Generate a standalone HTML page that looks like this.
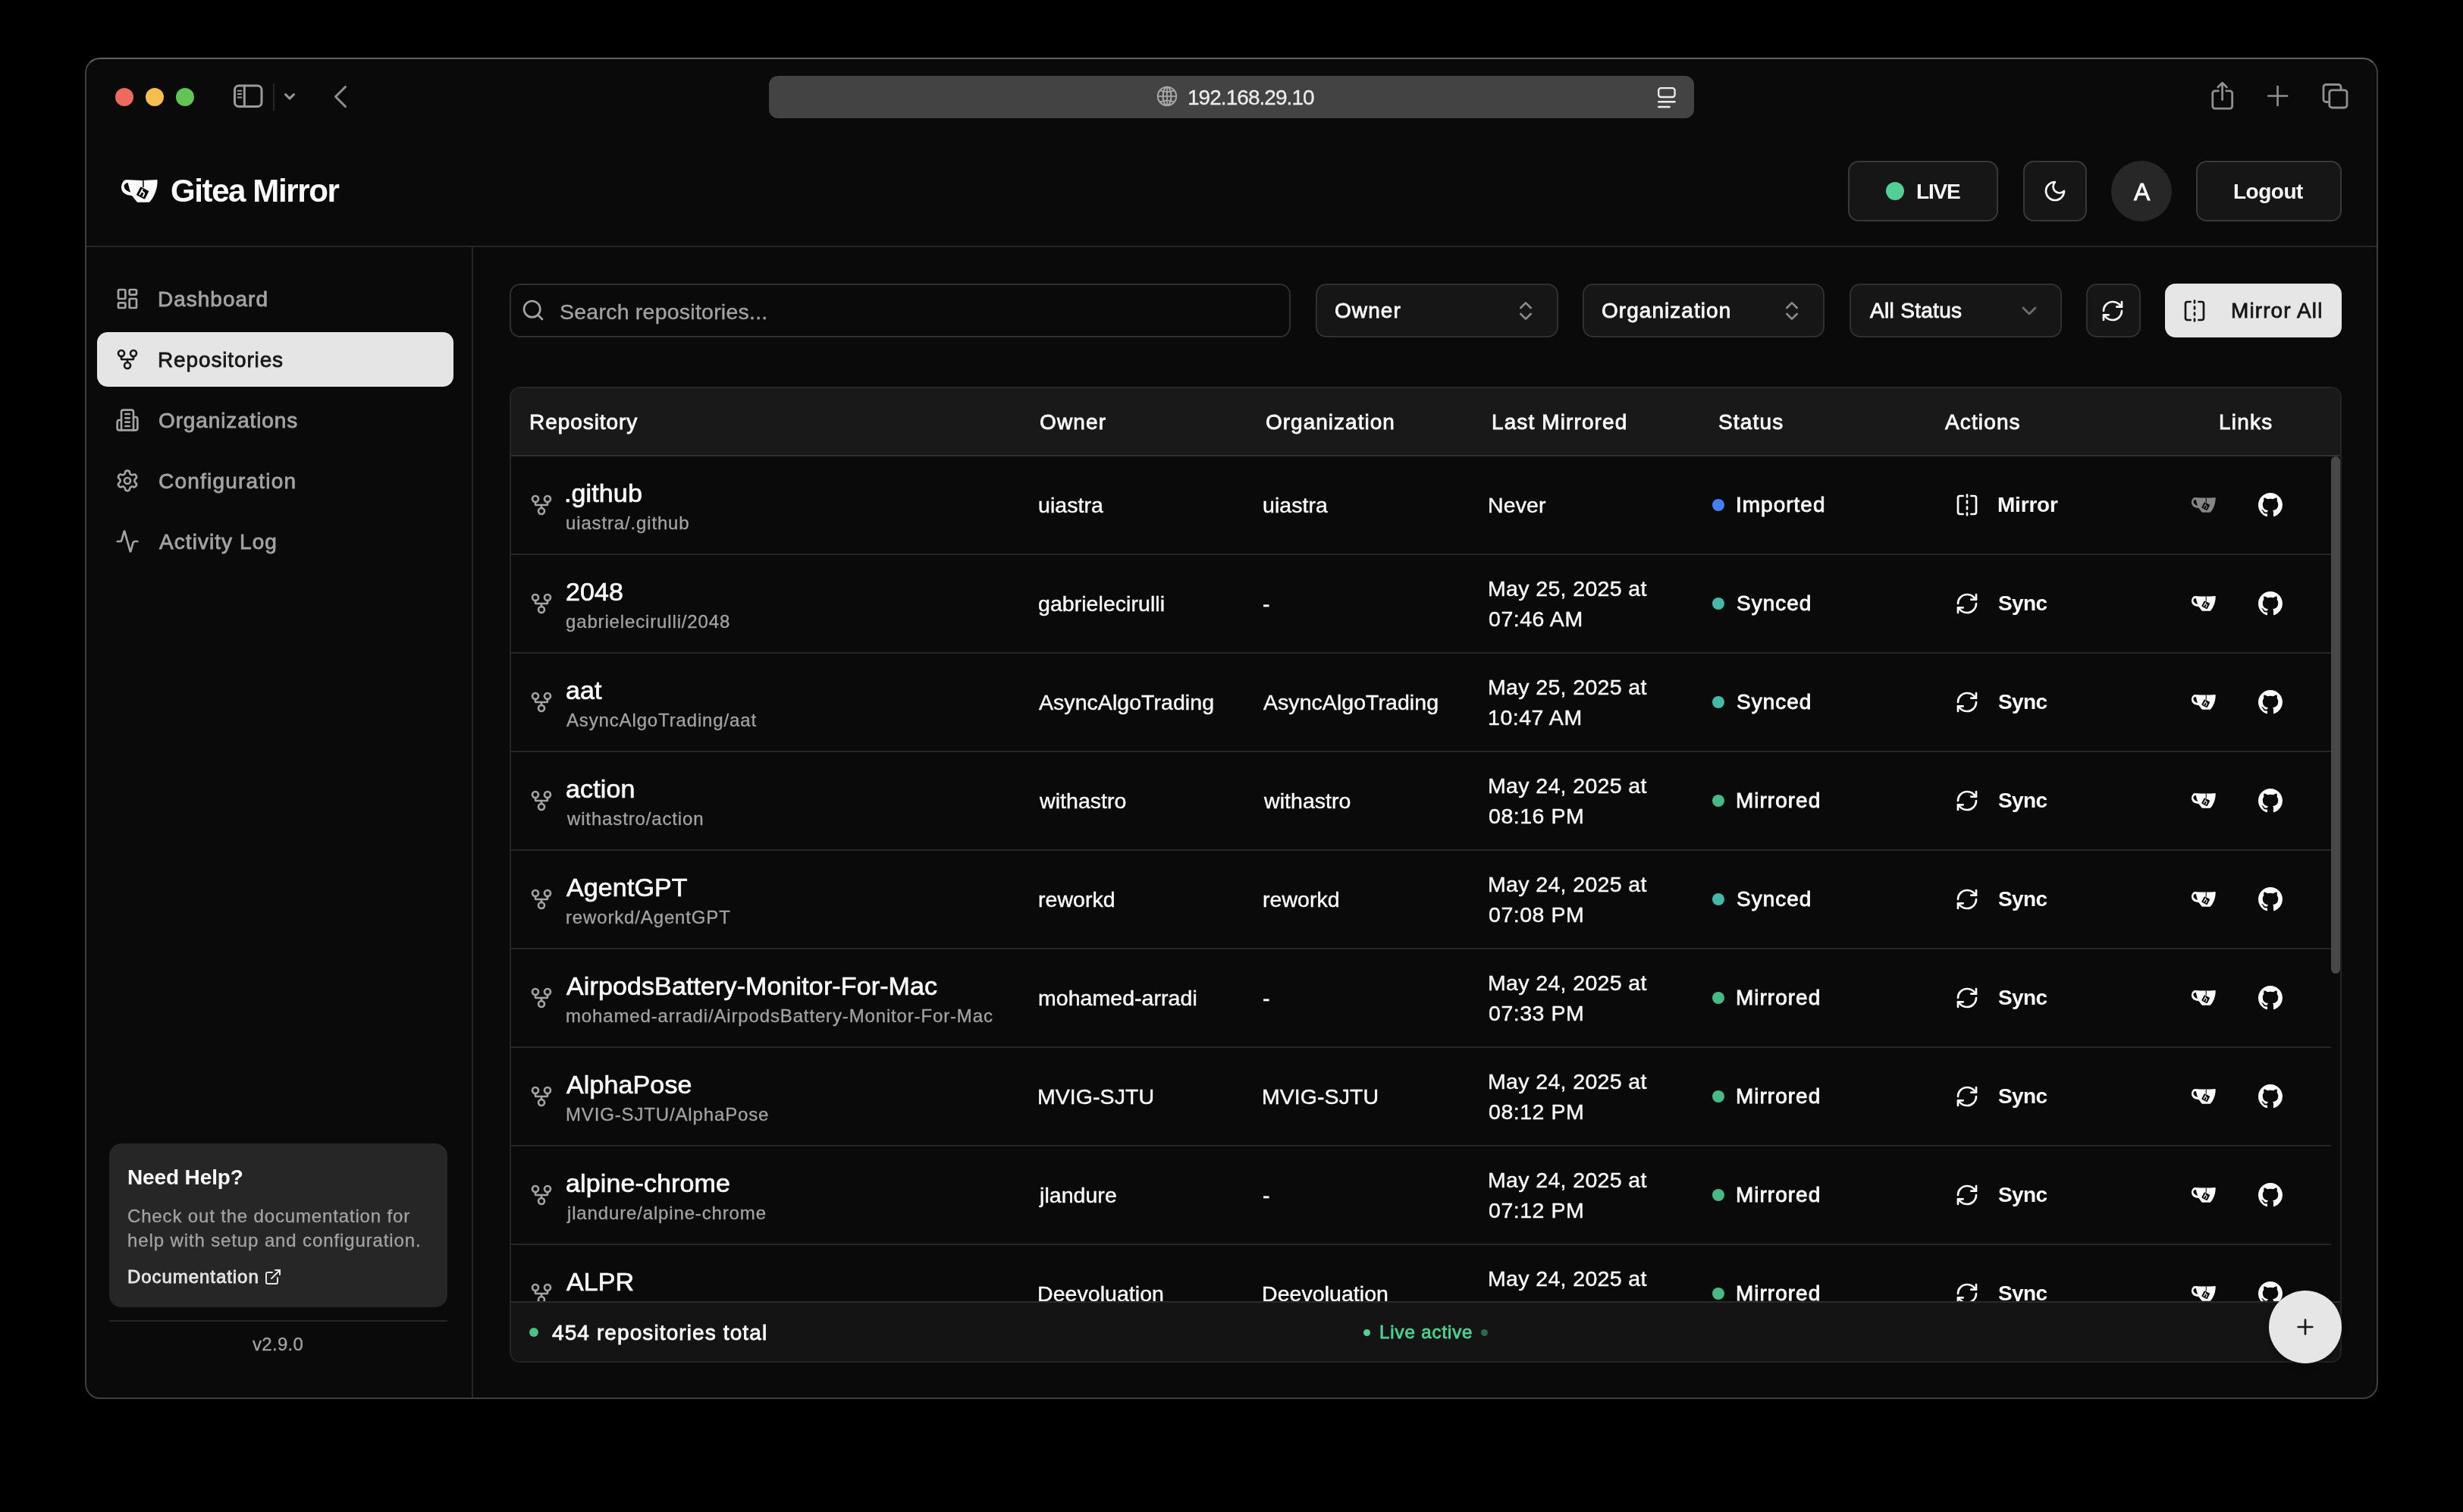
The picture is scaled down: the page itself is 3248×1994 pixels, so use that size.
<!DOCTYPE html>
<html><head><meta charset="utf-8">
<style>
html,body{margin:0;padding:0;}
body{width:3248px;height:1994px;background:#000;position:relative;overflow:hidden;font-family:"Liberation Sans",sans-serif;}
.box{position:absolute;box-sizing:border-box;}
.t{position:absolute;white-space:nowrap;font-family:"Liberation Sans",sans-serif;z-index:3;will-change:transform;}
.ic{position:absolute;overflow:visible;z-index:3;}
.dot{position:absolute;border-radius:50%;z-index:3;}
</style></head>
<body>
<!-- window -->
<div class="box" style="left:112px;top:76px;width:3024px;height:1769px;border-radius:20px;background:#0a0a0a;border:2px solid #404040;border-top-color:#616161;"></div>

<!-- traffic lights -->
<div class="dot" style="left:152px;top:116px;width:24px;height:24px;background:#ec6a5e"></div>
<div class="dot" style="left:192px;top:116px;width:24px;height:24px;background:#f4bf4f"></div>
<div class="dot" style="left:232px;top:116px;width:24px;height:24px;background:#61c554"></div>

<!-- sidebar toggle etc -->
<svg class="ic" style="left:300px;top:100px;width:170px;height:50px" viewBox="300 100 170 50" fill="none" stroke="#9a9a9a" stroke-linecap="round" stroke-linejoin="round">
  <rect x="309.5" y="112.9" width="35.5" height="27.6" rx="5.5" stroke-width="3"/>
  <path d="M322.3 113 V140.4" stroke-width="3"/>
  <path d="M313.6 119.7 H318.3 M313.6 124.1 H318.3 M313.6 128.5 H318.3" stroke-width="2"/>
  <path d="M361 110 V146" stroke="#262626" stroke-width="2" stroke-linecap="butt"/>
  <path d="M376.5 124.5 L382 130 L387.5 124.5" stroke-width="3"/>
  <path d="M455.5 114.5 L442.5 127.5 L455.5 140.5" stroke-width="3" stroke="#8e8e8e"/>
</svg>

<!-- address bar -->
<div class="box" style="left:1014px;top:100px;width:1220px;height:56px;border-radius:12px;background:#434343"></div>
<svg class="ic" style="left:1520px;top:108px;width:40px;height:40px" viewBox="1520 108 40 40" fill="none" stroke="#a8a8a8" stroke-width="2">
  <circle cx="1539" cy="126.9" r="12.2"/>
  <ellipse cx="1539" cy="126.9" rx="5.4" ry="12.2"/>
  <path d="M1539 114.7 V139.1 M1526.8 126.9 H1551.2" stroke-width="1.8"/>
  <path d="M1529 119.2 Q1539 123.2 1549 119.2 M1529 134.6 Q1539 130.6 1549 134.6" stroke-width="1.8"/>
</svg>
<svg class="ic" style="left:2180px;top:108px;width:40px;height:40px" viewBox="2180 108 40 40" fill="none" stroke="#eeeeee" stroke-linecap="round">
  <rect x="2187.2" y="116.2" width="21.4" height="11.8" rx="3.2" stroke-width="2.3"/>
  <path d="M2187.2 134.3 H2208.6 M2187.2 141 H2201.6" stroke-width="2.4"/>
</svg>

<!-- right toolbar icons -->
<svg class="ic" style="left:2900px;top:100px;width:210px;height:50px" viewBox="2900 100 210 50" fill="none" stroke="#8f8f8f" stroke-width="2.8" stroke-linecap="round" stroke-linejoin="round">
  <path d="M2925.5 119.8 H2921 a3.2 3.2 0 0 0 -3.2 3.2 V140 a3.2 3.2 0 0 0 3.2 3.2 H2940.5 a3.2 3.2 0 0 0 3.2 -3.2 V123 a3.2 3.2 0 0 0 -3.2 -3.2 H2935.8"/>
  <path d="M2930.6 131.5 V109.5 M2924.8 115 L2930.6 109.2 L2936.4 115"/>
  <path d="M3003.6 114 V139 M2991.2 126.5 H3016.2" stroke-width="2.6"/>
  <path d="M3071.9 134.5 H3067.5 a3.5 3.5 0 0 1 -3.5 -3.5 V115 a3.5 3.5 0 0 1 3.5 -3.5 H3083.5 a3.5 3.5 0 0 1 3.5 3.5 V118.8"/>
  <rect x="3071.8" y="118.8" width="23.2" height="23.2" rx="3.5"/>
</svg>

<!-- header buttons -->
<div class="box" style="left:2437px;top:212px;width:198px;height:80px;border-radius:14px;background:#161616;border:2px solid #383838"></div>
<div class="dot" style="left:2487px;top:240px;width:24px;height:24px;background:#52cf95"></div>
<div class="box" style="left:2668px;top:212px;width:84px;height:80px;border-radius:14px;background:#161616;border:2px solid #383838"></div>
<div class="dot" style="left:2784px;top:212px;width:80px;height:80px;background:#272727"></div>
<div class="box" style="left:2896px;top:212px;width:192px;height:80px;border-radius:14px;background:#161616;border:2px solid #383838"></div>

<!-- header bottom border & sidebar border -->
<div class="box" style="left:114px;top:324px;width:3020px;height:2px;background:#262626"></div>
<div class="box" style="left:622px;top:326px;width:2px;height:1517px;background:#262626"></div>

<!-- sidebar active -->
<div class="box" style="left:128px;top:438px;width:470px;height:72px;border-radius:14px;background:#e5e5e5"></div>
<!-- help box -->
<div class="box" style="left:144px;top:1508px;width:446px;height:216px;border-radius:16px;background:#262626"></div>
<div class="box" style="left:144px;top:1741px;width:446px;height:2px;background:#262626"></div>

<!-- toolbar -->
<div class="box" style="left:672px;top:374px;width:1030px;height:71px;border-radius:14px;border:2px solid #2f2f2f"></div>
<div class="box" style="left:1735px;top:374px;width:320px;height:71px;border-radius:14px;background:#161616;border:2px solid #2f2f2f"></div>
<div class="box" style="left:2087px;top:374px;width:319px;height:71px;border-radius:14px;background:#161616;border:2px solid #2f2f2f"></div>
<div class="box" style="left:2439px;top:374px;width:280px;height:71px;border-radius:14px;background:#161616;border:2px solid #2f2f2f"></div>
<div class="box" style="left:2751px;top:374px;width:72px;height:71px;border-radius:14px;background:#161616;border:2px solid #2f2f2f"></div>
<div class="box" style="left:2855px;top:374px;width:233px;height:71px;border-radius:14px;background:#e6e6e6"></div>

<!-- table -->
<div class="box" style="left:672px;top:510px;width:2416px;height:1287px;border-radius:14px;border:2px solid #242424;background:#0a0a0a;overflow:hidden">
  <div class="box" style="left:0;top:0;width:2412px;height:88px;background:#191919"></div>
  <div class="box" style="left:0;top:88px;width:2412px;height:2px;background:#303030"></div>
</div>
<div class="box" style="left:674px;top:730px;width:2400px;height:2px;background:#262626"></div>
<div class="box" style="left:674px;top:860px;width:2400px;height:2px;background:#262626"></div>
<div class="box" style="left:674px;top:990px;width:2400px;height:2px;background:#262626"></div>
<div class="box" style="left:674px;top:1120px;width:2400px;height:2px;background:#262626"></div>
<div class="box" style="left:674px;top:1250px;width:2400px;height:2px;background:#262626"></div>
<div class="box" style="left:674px;top:1380px;width:2400px;height:2px;background:#262626"></div>
<div class="box" style="left:674px;top:1510px;width:2400px;height:2px;background:#262626"></div>
<div class="box" style="left:674px;top:1640px;width:2400px;height:2px;background:#262626"></div>
<div class="box" style="left:3074px;top:602px;width:12px;height:682px;border-radius:6px;background:#484848;z-index:2"></div>
<!-- footer -->
<div class="box" style="left:674px;top:1716px;width:2412px;height:79px;background:#141414;border-top:2px solid #2a2a2a;border-radius:0 0 12px 12px;z-index:5"></div>
<div class="dot" style="left:698px;top:1751px;width:12px;height:12px;background:#4bbf86;z-index:6"></div>
<div class="dot" style="left:1798px;top:1752.7px;width:9px;height:9px;background:#4fd192;z-index:6"></div>
<div class="dot" style="left:1953px;top:1752.7px;width:9px;height:9px;background:#2a6a4c;z-index:6"></div>
<!-- FAB -->
<div class="dot" style="left:2992px;top:1702px;width:96px;height:96px;background:#e6e6e6;z-index:7;box-shadow:0 4px 10px rgba(0,0,0,.25)"></div>
<svg class="ic" style="left:3024px;top:1734px;width:32px;height:32px;z-index:8" viewBox="0 0 24 24" fill="none" stroke="#171717" stroke-width="2" stroke-linecap="round"><path d="M5 12h14"/><path d="M12 5v14"/></svg>

<svg class="ic" style="left:152px;top:378px;width:32px;height:32px;" viewBox="0 0 24 24" fill="none" stroke="#a3a3a3" stroke-width="2" stroke-linecap="round" stroke-linejoin="round"><rect width="7" height="9" x="3" y="3" rx="1"/><rect width="7" height="5" x="14" y="3" rx="1"/><rect width="7" height="9" x="14" y="12" rx="1"/><rect width="7" height="5" x="3" y="16" rx="1"/></svg>
<svg class="ic" style="left:152px;top:458px;width:32px;height:32px;" viewBox="0 0 24 24" fill="none" stroke="#171717" stroke-width="2" stroke-linecap="round" stroke-linejoin="round"><circle cx="12" cy="18" r="3"/><circle cx="6" cy="6" r="3"/><circle cx="18" cy="6" r="3"/><path d="M18 9v2c0 .6-.4 1-1 1H7c-.6 0-1-.4-1-1V9"/><path d="M12 12v3"/></svg>
<svg class="ic" style="left:152px;top:538px;width:32px;height:32px;" viewBox="0 0 24 24" fill="none" stroke="#a3a3a3" stroke-width="2" stroke-linecap="round" stroke-linejoin="round"><path d="M6 22V4a2 2 0 0 1 2-2h8a2 2 0 0 1 2 2v18Z"/><path d="M6 12H4a2 2 0 0 0-2 2v6a2 2 0 0 0 2 2h2"/><path d="M18 9h2a2 2 0 0 1 2 2v9a2 2 0 0 1-2 2h-2"/><path d="M10 6h4"/><path d="M10 10h4"/><path d="M10 14h4"/><path d="M10 18h4"/></svg>
<svg class="ic" style="left:152px;top:618px;width:32px;height:32px;" viewBox="0 0 24 24" fill="none" stroke="#a3a3a3" stroke-width="2" stroke-linecap="round" stroke-linejoin="round"><path d="M9.671 4.136a2.34 2.34 0 0 1 4.659 0 2.34 2.34 0 0 0 3.319 1.915 2.34 2.34 0 0 1 2.33 4.033 2.34 2.34 0 0 0 0 3.831 2.34 2.34 0 0 1-2.33 4.033 2.34 2.34 0 0 0-3.319 1.915 2.34 2.34 0 0 1-4.659 0 2.34 2.34 0 0 0-3.32-1.915 2.34 2.34 0 0 1-2.33-4.033 2.34 2.34 0 0 0 0-3.831A2.34 2.34 0 0 1 6.35 6.051a2.34 2.34 0 0 0 3.319-1.915"/><circle cx="12" cy="12" r="3"/></svg>
<svg class="ic" style="left:152px;top:698px;width:32px;height:32px;" viewBox="0 0 24 24" fill="none" stroke="#a3a3a3" stroke-width="2" stroke-linecap="round" stroke-linejoin="round"><path d="M22 12h-2.48a2 2 0 0 0-1.93 1.46l-2.35 8.36a.25.25 0 0 1-.48 0L9.24 2.18a.25.25 0 0 0-.48 0l-2.35 8.36A2 2 0 0 1 4.49 12H2"/></svg>
<svg class="ic" style="left:348px;top:1671.8px;width:24px;height:24px;" viewBox="0 0 24 24" fill="none" stroke="#e5e5e5" stroke-width="2" stroke-linecap="round" stroke-linejoin="round"><path d="M15 3h6v6"/><path d="M10 14 21 3"/><path d="M18 13v6a2 2 0 0 1-2 2H5a2 2 0 0 1-2-2V8a2 2 0 0 1 2-2h6"/></svg>
<svg class="ic" style="left:687.3px;top:393.2px;width:32px;height:32px;" viewBox="0 0 24 24" fill="none" stroke="#a3a3a3" stroke-width="2" stroke-linecap="round" stroke-linejoin="round"><circle cx="11" cy="11" r="8"/><path d="m21 21-4.3-4.3"/></svg>
<svg class="ic" style="left:1996px;top:394px;width:32px;height:32px;" viewBox="0 0 24 24" fill="none" stroke="#8a8a8a" stroke-width="2" stroke-linecap="round" stroke-linejoin="round"><path d="m7 15 5 5 5-5"/><path d="m7 9 5-5 5 5"/></svg>
<svg class="ic" style="left:2347.4px;top:394px;width:32px;height:32px;" viewBox="0 0 24 24" fill="none" stroke="#8a8a8a" stroke-width="2" stroke-linecap="round" stroke-linejoin="round"><path d="m7 15 5 5 5-5"/><path d="m7 9 5-5 5 5"/></svg>
<svg class="ic" style="left:2660px;top:394px;width:32px;height:32px;" viewBox="0 0 24 24" fill="none" stroke="#6f6f6f" stroke-width="2" stroke-linecap="round" stroke-linejoin="round"><path d="m6 9 6 6 6-6"/></svg>
<svg class="ic" style="left:2770px;top:394px;width:32px;height:32px;" viewBox="0 0 24 24" fill="none" stroke="#fafafa" stroke-width="2" stroke-linecap="round" stroke-linejoin="round"><path d="M3 12a9 9 0 0 1 9-9 9.75 9.75 0 0 1 6.74 2.74L21 8"/><path d="M21 3v5h-5"/><path d="M21 12a9 9 0 0 1-9 9 9.75 9.75 0 0 1-6.74-2.74L3 16"/><path d="M8 16H3v5"/></svg>
<svg class="ic" style="left:2878px;top:394px;width:32px;height:32px;" viewBox="0 0 24 24" fill="none" stroke="#171717" stroke-width="2" stroke-linecap="round" stroke-linejoin="round"><path d="M8 3H5a2 2 0 0 0-2 2v14c0 1.1.9 2 2 2h3"/><path d="M16 3h3a2 2 0 0 1 2 2v14a2 2 0 0 1-2 2h-3"/><path d="M12 20v2"/><path d="M12 14v2"/><path d="M12 8v2"/><path d="M12 2v2"/></svg>
<svg class="ic" style="left:2694px;top:235.5px;width:32px;height:32px;" viewBox="0 0 24 24" fill="none" stroke="#fafafa" stroke-width="2" stroke-linecap="round" stroke-linejoin="round"><path d="M12 3a6 6 0 0 0 9 9 9 9 0 1 1-9-9Z"/></svg>
<svg class="ic" style="left:160px;top:237px;width:48px;height:30.0px;" viewBox="0 0 48 30"><path fill="#fafafa" d="M6.7 0.1 Q28 1.7 47.4 0.1 C47.7 3 47.5 8 46 13 C44 20 40.5 26.5 36.7 29.8 L21.1 29.8 C18.5 27 16 23.5 13.9 21 C9 20.6 6 19.6 3.5 17.5 C1 15.5 0 12.5 0 10.2 C0 4.5 3.5 0.3 6.7 0.1 Z"/><path fill="#0a0a0a" d="M8.6 4.1 C5.5 4.6 3.6 6.5 3.6 8.6 C3.8 12.5 7.5 15.5 12 16.6 C10.8 12.5 9.6 8.2 8.6 4.1 Z"/><path stroke="#0a0a0a" stroke-width="1.6" d="M28.9 0.8 V10"/><g transform="translate(28.1 17.6) rotate(27.6)"><rect x="-6.3" y="-6.2" width="12.6" height="12.4" rx="1.4" fill="#0a0a0a"/><path fill="none" stroke="#fafafa" stroke-width="1.7" stroke-linecap="round" d="M-2.5 -3.9 V3.7 M-2.5 0.3 C-2.5 -2.2 2.4 -2.2 2.4 0.3 V3.7"/></g></svg>
<svg class="ic" style="left:698px;top:650px;width:32px;height:32px;" viewBox="0 0 24 24" fill="none" stroke="#a3a3a3" stroke-width="2" stroke-linecap="round" stroke-linejoin="round"><circle cx="12" cy="18" r="3"/><circle cx="6" cy="6" r="3"/><circle cx="18" cy="6" r="3"/><path d="M18 9v2c0 .6-.4 1-1 1H7c-.6 0-1-.4-1-1V9"/><path d="M12 12v3"/></svg>
<svg class="ic" style="left:2578px;top:650px;width:32px;height:32px;" viewBox="0 0 24 24" fill="none" stroke="#fafafa" stroke-width="2" stroke-linecap="round" stroke-linejoin="round"><path d="M8 3H5a2 2 0 0 0-2 2v14c0 1.1.9 2 2 2h3"/><path d="M16 3h3a2 2 0 0 1 2 2v14a2 2 0 0 1-2 2h-3"/><path d="M12 20v2"/><path d="M12 14v2"/><path d="M12 8v2"/><path d="M12 2v2"/></svg>
<svg class="ic" style="left:2890px;top:656px;width:32px;height:20.0px;" viewBox="0 0 48 30"><path fill="#868686" d="M6.7 0.1 Q28 1.7 47.4 0.1 C47.7 3 47.5 8 46 13 C44 20 40.5 26.5 36.7 29.8 L21.1 29.8 C18.5 27 16 23.5 13.9 21 C9 20.6 6 19.6 3.5 17.5 C1 15.5 0 12.5 0 10.2 C0 4.5 3.5 0.3 6.7 0.1 Z"/><path fill="#0a0a0a" d="M8.6 4.1 C5.5 4.6 3.6 6.5 3.6 8.6 C3.8 12.5 7.5 15.5 12 16.6 C10.8 12.5 9.6 8.2 8.6 4.1 Z"/><path stroke="#0a0a0a" stroke-width="1.6" d="M28.9 0.8 V10"/><g transform="translate(28.1 17.6) rotate(27.6)"><rect x="-6.3" y="-6.2" width="12.6" height="12.4" rx="1.4" fill="#0a0a0a"/><path fill="none" stroke="#868686" stroke-width="1.7" stroke-linecap="round" d="M-2.5 -3.9 V3.7 M-2.5 0.3 C-2.5 -2.2 2.4 -2.2 2.4 0.3 V3.7"/></g></svg>
<svg class="ic" style="left:2978px;top:650px;width:32px;height:32px" viewBox="0 0 16 16"><path fill="#fafafa" d="M8 0C3.58 0 0 3.58 0 8c0 3.54 2.29 6.53 5.47 7.59.4.07.55-.17.55-.38 0-.19-.01-.82-.01-1.49-2.01.37-2.53-.49-2.69-.94-.09-.23-.48-.94-.82-1.13-.28-.15-.68-.52-.01-.53.63-.01 1.08.58 1.23.82.72 1.21 1.87.87 2.33.66.07-.52.28-.87.51-1.07-1.78-.2-3.64-.89-3.64-3.95 0-.87.31-1.59.82-2.15-.08-.2-.36-1.02.08-2.12 0 0 .67-.21 2.2.82.64-.18 1.32-.27 2-.27.68 0 1.36.09 2 .27 1.53-1.04 2.2-.82 2.2-.82.44 1.1.16 1.92.08 2.12.51.56.82 1.27.82 2.15 0 3.07-1.87 3.75-3.65 3.95.29.25.54.73.54 1.48 0 1.07-.01 1.93-.01 2.2 0 .21.15.46.55.38A8.013 8.013 0 0016 8c0-4.42-3.58-8-8-8z"/></svg>
<div class="dot" style="left:2258px;top:658px;width:16px;height:16px;background:#4380fa"></div>
<svg class="ic" style="left:698px;top:780px;width:32px;height:32px;" viewBox="0 0 24 24" fill="none" stroke="#a3a3a3" stroke-width="2" stroke-linecap="round" stroke-linejoin="round"><circle cx="12" cy="18" r="3"/><circle cx="6" cy="6" r="3"/><circle cx="18" cy="6" r="3"/><path d="M18 9v2c0 .6-.4 1-1 1H7c-.6 0-1-.4-1-1V9"/><path d="M12 12v3"/></svg>
<svg class="ic" style="left:2578px;top:780px;width:32px;height:32px;" viewBox="0 0 24 24" fill="none" stroke="#fafafa" stroke-width="2" stroke-linecap="round" stroke-linejoin="round"><path d="M3 12a9 9 0 0 1 9-9 9.75 9.75 0 0 1 6.74 2.74L21 8"/><path d="M21 3v5h-5"/><path d="M21 12a9 9 0 0 1-9 9 9.75 9.75 0 0 1-6.74-2.74L3 16"/><path d="M8 16H3v5"/></svg>
<svg class="ic" style="left:2890px;top:786px;width:32px;height:20.0px;" viewBox="0 0 48 30"><path fill="#fafafa" d="M6.7 0.1 Q28 1.7 47.4 0.1 C47.7 3 47.5 8 46 13 C44 20 40.5 26.5 36.7 29.8 L21.1 29.8 C18.5 27 16 23.5 13.9 21 C9 20.6 6 19.6 3.5 17.5 C1 15.5 0 12.5 0 10.2 C0 4.5 3.5 0.3 6.7 0.1 Z"/><path fill="#0a0a0a" d="M8.6 4.1 C5.5 4.6 3.6 6.5 3.6 8.6 C3.8 12.5 7.5 15.5 12 16.6 C10.8 12.5 9.6 8.2 8.6 4.1 Z"/><path stroke="#0a0a0a" stroke-width="1.6" d="M28.9 0.8 V10"/><g transform="translate(28.1 17.6) rotate(27.6)"><rect x="-6.3" y="-6.2" width="12.6" height="12.4" rx="1.4" fill="#0a0a0a"/><path fill="none" stroke="#fafafa" stroke-width="1.7" stroke-linecap="round" d="M-2.5 -3.9 V3.7 M-2.5 0.3 C-2.5 -2.2 2.4 -2.2 2.4 0.3 V3.7"/></g></svg>
<svg class="ic" style="left:2978px;top:780px;width:32px;height:32px" viewBox="0 0 16 16"><path fill="#fafafa" d="M8 0C3.58 0 0 3.58 0 8c0 3.54 2.29 6.53 5.47 7.59.4.07.55-.17.55-.38 0-.19-.01-.82-.01-1.49-2.01.37-2.53-.49-2.69-.94-.09-.23-.48-.94-.82-1.13-.28-.15-.68-.52-.01-.53.63-.01 1.08.58 1.23.82.72 1.21 1.87.87 2.33.66.07-.52.28-.87.51-1.07-1.78-.2-3.64-.89-3.64-3.95 0-.87.31-1.59.82-2.15-.08-.2-.36-1.02.08-2.12 0 0 .67-.21 2.2.82.64-.18 1.32-.27 2-.27.68 0 1.36.09 2 .27 1.53-1.04 2.2-.82 2.2-.82.44 1.1.16 1.92.08 2.12.51.56.82 1.27.82 2.15 0 3.07-1.87 3.75-3.65 3.95.29.25.54.73.54 1.48 0 1.07-.01 1.93-.01 2.2 0 .21.15.46.55.38A8.013 8.013 0 0016 8c0-4.42-3.58-8-8-8z"/></svg>
<div class="dot" style="left:2258px;top:788px;width:16px;height:16px;background:#45b9a8"></div>
<svg class="ic" style="left:698px;top:910px;width:32px;height:32px;" viewBox="0 0 24 24" fill="none" stroke="#a3a3a3" stroke-width="2" stroke-linecap="round" stroke-linejoin="round"><circle cx="12" cy="18" r="3"/><circle cx="6" cy="6" r="3"/><circle cx="18" cy="6" r="3"/><path d="M18 9v2c0 .6-.4 1-1 1H7c-.6 0-1-.4-1-1V9"/><path d="M12 12v3"/></svg>
<svg class="ic" style="left:2578px;top:910px;width:32px;height:32px;" viewBox="0 0 24 24" fill="none" stroke="#fafafa" stroke-width="2" stroke-linecap="round" stroke-linejoin="round"><path d="M3 12a9 9 0 0 1 9-9 9.75 9.75 0 0 1 6.74 2.74L21 8"/><path d="M21 3v5h-5"/><path d="M21 12a9 9 0 0 1-9 9 9.75 9.75 0 0 1-6.74-2.74L3 16"/><path d="M8 16H3v5"/></svg>
<svg class="ic" style="left:2890px;top:916px;width:32px;height:20.0px;" viewBox="0 0 48 30"><path fill="#fafafa" d="M6.7 0.1 Q28 1.7 47.4 0.1 C47.7 3 47.5 8 46 13 C44 20 40.5 26.5 36.7 29.8 L21.1 29.8 C18.5 27 16 23.5 13.9 21 C9 20.6 6 19.6 3.5 17.5 C1 15.5 0 12.5 0 10.2 C0 4.5 3.5 0.3 6.7 0.1 Z"/><path fill="#0a0a0a" d="M8.6 4.1 C5.5 4.6 3.6 6.5 3.6 8.6 C3.8 12.5 7.5 15.5 12 16.6 C10.8 12.5 9.6 8.2 8.6 4.1 Z"/><path stroke="#0a0a0a" stroke-width="1.6" d="M28.9 0.8 V10"/><g transform="translate(28.1 17.6) rotate(27.6)"><rect x="-6.3" y="-6.2" width="12.6" height="12.4" rx="1.4" fill="#0a0a0a"/><path fill="none" stroke="#fafafa" stroke-width="1.7" stroke-linecap="round" d="M-2.5 -3.9 V3.7 M-2.5 0.3 C-2.5 -2.2 2.4 -2.2 2.4 0.3 V3.7"/></g></svg>
<svg class="ic" style="left:2978px;top:910px;width:32px;height:32px" viewBox="0 0 16 16"><path fill="#fafafa" d="M8 0C3.58 0 0 3.58 0 8c0 3.54 2.29 6.53 5.47 7.59.4.07.55-.17.55-.38 0-.19-.01-.82-.01-1.49-2.01.37-2.53-.49-2.69-.94-.09-.23-.48-.94-.82-1.13-.28-.15-.68-.52-.01-.53.63-.01 1.08.58 1.23.82.72 1.21 1.87.87 2.33.66.07-.52.28-.87.51-1.07-1.78-.2-3.64-.89-3.64-3.95 0-.87.31-1.59.82-2.15-.08-.2-.36-1.02.08-2.12 0 0 .67-.21 2.2.82.64-.18 1.32-.27 2-.27.68 0 1.36.09 2 .27 1.53-1.04 2.2-.82 2.2-.82.44 1.1.16 1.92.08 2.12.51.56.82 1.27.82 2.15 0 3.07-1.87 3.75-3.65 3.95.29.25.54.73.54 1.48 0 1.07-.01 1.93-.01 2.2 0 .21.15.46.55.38A8.013 8.013 0 0016 8c0-4.42-3.58-8-8-8z"/></svg>
<div class="dot" style="left:2258px;top:918px;width:16px;height:16px;background:#45b9a8"></div>
<svg class="ic" style="left:698px;top:1040px;width:32px;height:32px;" viewBox="0 0 24 24" fill="none" stroke="#a3a3a3" stroke-width="2" stroke-linecap="round" stroke-linejoin="round"><circle cx="12" cy="18" r="3"/><circle cx="6" cy="6" r="3"/><circle cx="18" cy="6" r="3"/><path d="M18 9v2c0 .6-.4 1-1 1H7c-.6 0-1-.4-1-1V9"/><path d="M12 12v3"/></svg>
<svg class="ic" style="left:2578px;top:1040px;width:32px;height:32px;" viewBox="0 0 24 24" fill="none" stroke="#fafafa" stroke-width="2" stroke-linecap="round" stroke-linejoin="round"><path d="M3 12a9 9 0 0 1 9-9 9.75 9.75 0 0 1 6.74 2.74L21 8"/><path d="M21 3v5h-5"/><path d="M21 12a9 9 0 0 1-9 9 9.75 9.75 0 0 1-6.74-2.74L3 16"/><path d="M8 16H3v5"/></svg>
<svg class="ic" style="left:2890px;top:1046px;width:32px;height:20.0px;" viewBox="0 0 48 30"><path fill="#fafafa" d="M6.7 0.1 Q28 1.7 47.4 0.1 C47.7 3 47.5 8 46 13 C44 20 40.5 26.5 36.7 29.8 L21.1 29.8 C18.5 27 16 23.5 13.9 21 C9 20.6 6 19.6 3.5 17.5 C1 15.5 0 12.5 0 10.2 C0 4.5 3.5 0.3 6.7 0.1 Z"/><path fill="#0a0a0a" d="M8.6 4.1 C5.5 4.6 3.6 6.5 3.6 8.6 C3.8 12.5 7.5 15.5 12 16.6 C10.8 12.5 9.6 8.2 8.6 4.1 Z"/><path stroke="#0a0a0a" stroke-width="1.6" d="M28.9 0.8 V10"/><g transform="translate(28.1 17.6) rotate(27.6)"><rect x="-6.3" y="-6.2" width="12.6" height="12.4" rx="1.4" fill="#0a0a0a"/><path fill="none" stroke="#fafafa" stroke-width="1.7" stroke-linecap="round" d="M-2.5 -3.9 V3.7 M-2.5 0.3 C-2.5 -2.2 2.4 -2.2 2.4 0.3 V3.7"/></g></svg>
<svg class="ic" style="left:2978px;top:1040px;width:32px;height:32px" viewBox="0 0 16 16"><path fill="#fafafa" d="M8 0C3.58 0 0 3.58 0 8c0 3.54 2.29 6.53 5.47 7.59.4.07.55-.17.55-.38 0-.19-.01-.82-.01-1.49-2.01.37-2.53-.49-2.69-.94-.09-.23-.48-.94-.82-1.13-.28-.15-.68-.52-.01-.53.63-.01 1.08.58 1.23.82.72 1.21 1.87.87 2.33.66.07-.52.28-.87.51-1.07-1.78-.2-3.64-.89-3.64-3.95 0-.87.31-1.59.82-2.15-.08-.2-.36-1.02.08-2.12 0 0 .67-.21 2.2.82.64-.18 1.32-.27 2-.27.68 0 1.36.09 2 .27 1.53-1.04 2.2-.82 2.2-.82.44 1.1.16 1.92.08 2.12.51.56.82 1.27.82 2.15 0 3.07-1.87 3.75-3.65 3.95.29.25.54.73.54 1.48 0 1.07-.01 1.93-.01 2.2 0 .21.15.46.55.38A8.013 8.013 0 0016 8c0-4.42-3.58-8-8-8z"/></svg>
<div class="dot" style="left:2258px;top:1048px;width:16px;height:16px;background:#46b985"></div>
<svg class="ic" style="left:698px;top:1170px;width:32px;height:32px;" viewBox="0 0 24 24" fill="none" stroke="#a3a3a3" stroke-width="2" stroke-linecap="round" stroke-linejoin="round"><circle cx="12" cy="18" r="3"/><circle cx="6" cy="6" r="3"/><circle cx="18" cy="6" r="3"/><path d="M18 9v2c0 .6-.4 1-1 1H7c-.6 0-1-.4-1-1V9"/><path d="M12 12v3"/></svg>
<svg class="ic" style="left:2578px;top:1170px;width:32px;height:32px;" viewBox="0 0 24 24" fill="none" stroke="#fafafa" stroke-width="2" stroke-linecap="round" stroke-linejoin="round"><path d="M3 12a9 9 0 0 1 9-9 9.75 9.75 0 0 1 6.74 2.74L21 8"/><path d="M21 3v5h-5"/><path d="M21 12a9 9 0 0 1-9 9 9.75 9.75 0 0 1-6.74-2.74L3 16"/><path d="M8 16H3v5"/></svg>
<svg class="ic" style="left:2890px;top:1176px;width:32px;height:20.0px;" viewBox="0 0 48 30"><path fill="#fafafa" d="M6.7 0.1 Q28 1.7 47.4 0.1 C47.7 3 47.5 8 46 13 C44 20 40.5 26.5 36.7 29.8 L21.1 29.8 C18.5 27 16 23.5 13.9 21 C9 20.6 6 19.6 3.5 17.5 C1 15.5 0 12.5 0 10.2 C0 4.5 3.5 0.3 6.7 0.1 Z"/><path fill="#0a0a0a" d="M8.6 4.1 C5.5 4.6 3.6 6.5 3.6 8.6 C3.8 12.5 7.5 15.5 12 16.6 C10.8 12.5 9.6 8.2 8.6 4.1 Z"/><path stroke="#0a0a0a" stroke-width="1.6" d="M28.9 0.8 V10"/><g transform="translate(28.1 17.6) rotate(27.6)"><rect x="-6.3" y="-6.2" width="12.6" height="12.4" rx="1.4" fill="#0a0a0a"/><path fill="none" stroke="#fafafa" stroke-width="1.7" stroke-linecap="round" d="M-2.5 -3.9 V3.7 M-2.5 0.3 C-2.5 -2.2 2.4 -2.2 2.4 0.3 V3.7"/></g></svg>
<svg class="ic" style="left:2978px;top:1170px;width:32px;height:32px" viewBox="0 0 16 16"><path fill="#fafafa" d="M8 0C3.58 0 0 3.58 0 8c0 3.54 2.29 6.53 5.47 7.59.4.07.55-.17.55-.38 0-.19-.01-.82-.01-1.49-2.01.37-2.53-.49-2.69-.94-.09-.23-.48-.94-.82-1.13-.28-.15-.68-.52-.01-.53.63-.01 1.08.58 1.23.82.72 1.21 1.87.87 2.33.66.07-.52.28-.87.51-1.07-1.78-.2-3.64-.89-3.64-3.95 0-.87.31-1.59.82-2.15-.08-.2-.36-1.02.08-2.12 0 0 .67-.21 2.2.82.64-.18 1.32-.27 2-.27.68 0 1.36.09 2 .27 1.53-1.04 2.2-.82 2.2-.82.44 1.1.16 1.92.08 2.12.51.56.82 1.27.82 2.15 0 3.07-1.87 3.75-3.65 3.95.29.25.54.73.54 1.48 0 1.07-.01 1.93-.01 2.2 0 .21.15.46.55.38A8.013 8.013 0 0016 8c0-4.42-3.58-8-8-8z"/></svg>
<div class="dot" style="left:2258px;top:1178px;width:16px;height:16px;background:#45b9a8"></div>
<svg class="ic" style="left:698px;top:1300px;width:32px;height:32px;" viewBox="0 0 24 24" fill="none" stroke="#a3a3a3" stroke-width="2" stroke-linecap="round" stroke-linejoin="round"><circle cx="12" cy="18" r="3"/><circle cx="6" cy="6" r="3"/><circle cx="18" cy="6" r="3"/><path d="M18 9v2c0 .6-.4 1-1 1H7c-.6 0-1-.4-1-1V9"/><path d="M12 12v3"/></svg>
<svg class="ic" style="left:2578px;top:1300px;width:32px;height:32px;" viewBox="0 0 24 24" fill="none" stroke="#fafafa" stroke-width="2" stroke-linecap="round" stroke-linejoin="round"><path d="M3 12a9 9 0 0 1 9-9 9.75 9.75 0 0 1 6.74 2.74L21 8"/><path d="M21 3v5h-5"/><path d="M21 12a9 9 0 0 1-9 9 9.75 9.75 0 0 1-6.74-2.74L3 16"/><path d="M8 16H3v5"/></svg>
<svg class="ic" style="left:2890px;top:1306px;width:32px;height:20.0px;" viewBox="0 0 48 30"><path fill="#fafafa" d="M6.7 0.1 Q28 1.7 47.4 0.1 C47.7 3 47.5 8 46 13 C44 20 40.5 26.5 36.7 29.8 L21.1 29.8 C18.5 27 16 23.5 13.9 21 C9 20.6 6 19.6 3.5 17.5 C1 15.5 0 12.5 0 10.2 C0 4.5 3.5 0.3 6.7 0.1 Z"/><path fill="#0a0a0a" d="M8.6 4.1 C5.5 4.6 3.6 6.5 3.6 8.6 C3.8 12.5 7.5 15.5 12 16.6 C10.8 12.5 9.6 8.2 8.6 4.1 Z"/><path stroke="#0a0a0a" stroke-width="1.6" d="M28.9 0.8 V10"/><g transform="translate(28.1 17.6) rotate(27.6)"><rect x="-6.3" y="-6.2" width="12.6" height="12.4" rx="1.4" fill="#0a0a0a"/><path fill="none" stroke="#fafafa" stroke-width="1.7" stroke-linecap="round" d="M-2.5 -3.9 V3.7 M-2.5 0.3 C-2.5 -2.2 2.4 -2.2 2.4 0.3 V3.7"/></g></svg>
<svg class="ic" style="left:2978px;top:1300px;width:32px;height:32px" viewBox="0 0 16 16"><path fill="#fafafa" d="M8 0C3.58 0 0 3.58 0 8c0 3.54 2.29 6.53 5.47 7.59.4.07.55-.17.55-.38 0-.19-.01-.82-.01-1.49-2.01.37-2.53-.49-2.69-.94-.09-.23-.48-.94-.82-1.13-.28-.15-.68-.52-.01-.53.63-.01 1.08.58 1.23.82.72 1.21 1.87.87 2.33.66.07-.52.28-.87.51-1.07-1.78-.2-3.64-.89-3.64-3.95 0-.87.31-1.59.82-2.15-.08-.2-.36-1.02.08-2.12 0 0 .67-.21 2.2.82.64-.18 1.32-.27 2-.27.68 0 1.36.09 2 .27 1.53-1.04 2.2-.82 2.2-.82.44 1.1.16 1.92.08 2.12.51.56.82 1.27.82 2.15 0 3.07-1.87 3.75-3.65 3.95.29.25.54.73.54 1.48 0 1.07-.01 1.93-.01 2.2 0 .21.15.46.55.38A8.013 8.013 0 0016 8c0-4.42-3.58-8-8-8z"/></svg>
<div class="dot" style="left:2258px;top:1308px;width:16px;height:16px;background:#46b985"></div>
<svg class="ic" style="left:698px;top:1430px;width:32px;height:32px;" viewBox="0 0 24 24" fill="none" stroke="#a3a3a3" stroke-width="2" stroke-linecap="round" stroke-linejoin="round"><circle cx="12" cy="18" r="3"/><circle cx="6" cy="6" r="3"/><circle cx="18" cy="6" r="3"/><path d="M18 9v2c0 .6-.4 1-1 1H7c-.6 0-1-.4-1-1V9"/><path d="M12 12v3"/></svg>
<svg class="ic" style="left:2578px;top:1430px;width:32px;height:32px;" viewBox="0 0 24 24" fill="none" stroke="#fafafa" stroke-width="2" stroke-linecap="round" stroke-linejoin="round"><path d="M3 12a9 9 0 0 1 9-9 9.75 9.75 0 0 1 6.74 2.74L21 8"/><path d="M21 3v5h-5"/><path d="M21 12a9 9 0 0 1-9 9 9.75 9.75 0 0 1-6.74-2.74L3 16"/><path d="M8 16H3v5"/></svg>
<svg class="ic" style="left:2890px;top:1436px;width:32px;height:20.0px;" viewBox="0 0 48 30"><path fill="#fafafa" d="M6.7 0.1 Q28 1.7 47.4 0.1 C47.7 3 47.5 8 46 13 C44 20 40.5 26.5 36.7 29.8 L21.1 29.8 C18.5 27 16 23.5 13.9 21 C9 20.6 6 19.6 3.5 17.5 C1 15.5 0 12.5 0 10.2 C0 4.5 3.5 0.3 6.7 0.1 Z"/><path fill="#0a0a0a" d="M8.6 4.1 C5.5 4.6 3.6 6.5 3.6 8.6 C3.8 12.5 7.5 15.5 12 16.6 C10.8 12.5 9.6 8.2 8.6 4.1 Z"/><path stroke="#0a0a0a" stroke-width="1.6" d="M28.9 0.8 V10"/><g transform="translate(28.1 17.6) rotate(27.6)"><rect x="-6.3" y="-6.2" width="12.6" height="12.4" rx="1.4" fill="#0a0a0a"/><path fill="none" stroke="#fafafa" stroke-width="1.7" stroke-linecap="round" d="M-2.5 -3.9 V3.7 M-2.5 0.3 C-2.5 -2.2 2.4 -2.2 2.4 0.3 V3.7"/></g></svg>
<svg class="ic" style="left:2978px;top:1430px;width:32px;height:32px" viewBox="0 0 16 16"><path fill="#fafafa" d="M8 0C3.58 0 0 3.58 0 8c0 3.54 2.29 6.53 5.47 7.59.4.07.55-.17.55-.38 0-.19-.01-.82-.01-1.49-2.01.37-2.53-.49-2.69-.94-.09-.23-.48-.94-.82-1.13-.28-.15-.68-.52-.01-.53.63-.01 1.08.58 1.23.82.72 1.21 1.87.87 2.33.66.07-.52.28-.87.51-1.07-1.78-.2-3.64-.89-3.64-3.95 0-.87.31-1.59.82-2.15-.08-.2-.36-1.02.08-2.12 0 0 .67-.21 2.2.82.64-.18 1.32-.27 2-.27.68 0 1.36.09 2 .27 1.53-1.04 2.2-.82 2.2-.82.44 1.1.16 1.92.08 2.12.51.56.82 1.27.82 2.15 0 3.07-1.87 3.75-3.65 3.95.29.25.54.73.54 1.48 0 1.07-.01 1.93-.01 2.2 0 .21.15.46.55.38A8.013 8.013 0 0016 8c0-4.42-3.58-8-8-8z"/></svg>
<div class="dot" style="left:2258px;top:1438px;width:16px;height:16px;background:#46b985"></div>
<svg class="ic" style="left:698px;top:1560px;width:32px;height:32px;" viewBox="0 0 24 24" fill="none" stroke="#a3a3a3" stroke-width="2" stroke-linecap="round" stroke-linejoin="round"><circle cx="12" cy="18" r="3"/><circle cx="6" cy="6" r="3"/><circle cx="18" cy="6" r="3"/><path d="M18 9v2c0 .6-.4 1-1 1H7c-.6 0-1-.4-1-1V9"/><path d="M12 12v3"/></svg>
<svg class="ic" style="left:2578px;top:1560px;width:32px;height:32px;" viewBox="0 0 24 24" fill="none" stroke="#fafafa" stroke-width="2" stroke-linecap="round" stroke-linejoin="round"><path d="M3 12a9 9 0 0 1 9-9 9.75 9.75 0 0 1 6.74 2.74L21 8"/><path d="M21 3v5h-5"/><path d="M21 12a9 9 0 0 1-9 9 9.75 9.75 0 0 1-6.74-2.74L3 16"/><path d="M8 16H3v5"/></svg>
<svg class="ic" style="left:2890px;top:1566px;width:32px;height:20.0px;" viewBox="0 0 48 30"><path fill="#fafafa" d="M6.7 0.1 Q28 1.7 47.4 0.1 C47.7 3 47.5 8 46 13 C44 20 40.5 26.5 36.7 29.8 L21.1 29.8 C18.5 27 16 23.5 13.9 21 C9 20.6 6 19.6 3.5 17.5 C1 15.5 0 12.5 0 10.2 C0 4.5 3.5 0.3 6.7 0.1 Z"/><path fill="#0a0a0a" d="M8.6 4.1 C5.5 4.6 3.6 6.5 3.6 8.6 C3.8 12.5 7.5 15.5 12 16.6 C10.8 12.5 9.6 8.2 8.6 4.1 Z"/><path stroke="#0a0a0a" stroke-width="1.6" d="M28.9 0.8 V10"/><g transform="translate(28.1 17.6) rotate(27.6)"><rect x="-6.3" y="-6.2" width="12.6" height="12.4" rx="1.4" fill="#0a0a0a"/><path fill="none" stroke="#fafafa" stroke-width="1.7" stroke-linecap="round" d="M-2.5 -3.9 V3.7 M-2.5 0.3 C-2.5 -2.2 2.4 -2.2 2.4 0.3 V3.7"/></g></svg>
<svg class="ic" style="left:2978px;top:1560px;width:32px;height:32px" viewBox="0 0 16 16"><path fill="#fafafa" d="M8 0C3.58 0 0 3.58 0 8c0 3.54 2.29 6.53 5.47 7.59.4.07.55-.17.55-.38 0-.19-.01-.82-.01-1.49-2.01.37-2.53-.49-2.69-.94-.09-.23-.48-.94-.82-1.13-.28-.15-.68-.52-.01-.53.63-.01 1.08.58 1.23.82.72 1.21 1.87.87 2.33.66.07-.52.28-.87.51-1.07-1.78-.2-3.64-.89-3.64-3.95 0-.87.31-1.59.82-2.15-.08-.2-.36-1.02.08-2.12 0 0 .67-.21 2.2.82.64-.18 1.32-.27 2-.27.68 0 1.36.09 2 .27 1.53-1.04 2.2-.82 2.2-.82.44 1.1.16 1.92.08 2.12.51.56.82 1.27.82 2.15 0 3.07-1.87 3.75-3.65 3.95.29.25.54.73.54 1.48 0 1.07-.01 1.93-.01 2.2 0 .21.15.46.55.38A8.013 8.013 0 0016 8c0-4.42-3.58-8-8-8z"/></svg>
<div class="dot" style="left:2258px;top:1568px;width:16px;height:16px;background:#46b985"></div>
<svg class="ic" style="left:698px;top:1690px;width:32px;height:32px;" viewBox="0 0 24 24" fill="none" stroke="#a3a3a3" stroke-width="2" stroke-linecap="round" stroke-linejoin="round"><circle cx="12" cy="18" r="3"/><circle cx="6" cy="6" r="3"/><circle cx="18" cy="6" r="3"/><path d="M18 9v2c0 .6-.4 1-1 1H7c-.6 0-1-.4-1-1V9"/><path d="M12 12v3"/></svg>
<svg class="ic" style="left:2578px;top:1690px;width:32px;height:32px;" viewBox="0 0 24 24" fill="none" stroke="#fafafa" stroke-width="2" stroke-linecap="round" stroke-linejoin="round"><path d="M3 12a9 9 0 0 1 9-9 9.75 9.75 0 0 1 6.74 2.74L21 8"/><path d="M21 3v5h-5"/><path d="M21 12a9 9 0 0 1-9 9 9.75 9.75 0 0 1-6.74-2.74L3 16"/><path d="M8 16H3v5"/></svg>
<svg class="ic" style="left:2890px;top:1696px;width:32px;height:20.0px;" viewBox="0 0 48 30"><path fill="#fafafa" d="M6.7 0.1 Q28 1.7 47.4 0.1 C47.7 3 47.5 8 46 13 C44 20 40.5 26.5 36.7 29.8 L21.1 29.8 C18.5 27 16 23.5 13.9 21 C9 20.6 6 19.6 3.5 17.5 C1 15.5 0 12.5 0 10.2 C0 4.5 3.5 0.3 6.7 0.1 Z"/><path fill="#0a0a0a" d="M8.6 4.1 C5.5 4.6 3.6 6.5 3.6 8.6 C3.8 12.5 7.5 15.5 12 16.6 C10.8 12.5 9.6 8.2 8.6 4.1 Z"/><path stroke="#0a0a0a" stroke-width="1.6" d="M28.9 0.8 V10"/><g transform="translate(28.1 17.6) rotate(27.6)"><rect x="-6.3" y="-6.2" width="12.6" height="12.4" rx="1.4" fill="#0a0a0a"/><path fill="none" stroke="#fafafa" stroke-width="1.7" stroke-linecap="round" d="M-2.5 -3.9 V3.7 M-2.5 0.3 C-2.5 -2.2 2.4 -2.2 2.4 0.3 V3.7"/></g></svg>
<svg class="ic" style="left:2978px;top:1690px;width:32px;height:32px" viewBox="0 0 16 16"><path fill="#fafafa" d="M8 0C3.58 0 0 3.58 0 8c0 3.54 2.29 6.53 5.47 7.59.4.07.55-.17.55-.38 0-.19-.01-.82-.01-1.49-2.01.37-2.53-.49-2.69-.94-.09-.23-.48-.94-.82-1.13-.28-.15-.68-.52-.01-.53.63-.01 1.08.58 1.23.82.72 1.21 1.87.87 2.33.66.07-.52.28-.87.51-1.07-1.78-.2-3.64-.89-3.64-3.95 0-.87.31-1.59.82-2.15-.08-.2-.36-1.02.08-2.12 0 0 .67-.21 2.2.82.64-.18 1.32-.27 2-.27.68 0 1.36.09 2 .27 1.53-1.04 2.2-.82 2.2-.82.44 1.1.16 1.92.08 2.12.51.56.82 1.27.82 2.15 0 3.07-1.87 3.75-3.65 3.95.29.25.54.73.54 1.48 0 1.07-.01 1.93-.01 2.2 0 .21.15.46.55.38A8.013 8.013 0 0016 8c0-4.42-3.58-8-8-8z"/></svg>
<div class="dot" style="left:2258px;top:1698px;width:16px;height:16px;background:#46b985"></div>
<div class="t" style="left:1566.00px;top:114.54px;font-size:28px;line-height:28px;color:#ececec;letter-spacing:-0.957px;-webkit-text-stroke:0.3px #ececec;">192.168.29.10</div>
<div class="t" style="left:224.60px;top:230.81px;font-size:42px;line-height:42px;color:#fafafa;font-weight:700;letter-spacing:-1.392px;">Gitea Mirror</div>
<div class="t" style="left:2526.70px;top:238.74px;font-size:28px;line-height:28px;color:#fafafa;font-weight:700;letter-spacing:-1.153px;">LIVE</div>
<div class="t" style="left:2814.30px;top:236.96px;font-size:32px;line-height:32px;color:#fafafa;-webkit-text-stroke:0.8px #fafafa;">A</div>
<div class="t" style="left:2945.00px;top:238.74px;font-size:28px;line-height:28px;color:#fafafa;font-weight:700;letter-spacing:-0.504px;">Logout</div>
<div class="t" style="left:208.30px;top:381.04px;font-size:28px;line-height:28px;color:#a3a3a3;letter-spacing:0.999px;-webkit-text-stroke:0.8px #a3a3a3;">Dashboard</div>
<div class="t" style="left:208.30px;top:461.14px;font-size:28px;line-height:28px;color:#171717;letter-spacing:0.861px;-webkit-text-stroke:0.8px #171717;">Repositories</div>
<div class="t" style="left:209.30px;top:541.14px;font-size:28px;line-height:28px;color:#a3a3a3;letter-spacing:0.870px;-webkit-text-stroke:0.8px #a3a3a3;">Organizations</div>
<div class="t" style="left:209.30px;top:621.14px;font-size:28px;line-height:28px;color:#a3a3a3;letter-spacing:1.202px;-webkit-text-stroke:0.8px #a3a3a3;">Configuration</div>
<div class="t" style="left:210.30px;top:701.14px;font-size:28px;line-height:28px;color:#a3a3a3;letter-spacing:1.064px;-webkit-text-stroke:0.8px #a3a3a3;">Activity Log</div>
<div class="t" style="left:167.80px;top:1538.74px;font-size:28px;line-height:28px;color:#fafafa;font-weight:700;letter-spacing:-0.125px;">Need Help?</div>
<div class="t" style="left:167.80px;top:1591.72px;font-size:24px;line-height:24px;color:#a3a3a3;letter-spacing:0.844px;-webkit-text-stroke:0.3px #a3a3a3;">Check out the documentation for</div>
<div class="t" style="left:167.80px;top:1624.32px;font-size:24px;line-height:24px;color:#a3a3a3;letter-spacing:0.882px;-webkit-text-stroke:0.3px #a3a3a3;">help with setup and configuration.</div>
<div class="t" style="left:167.80px;top:1671.72px;font-size:24px;line-height:24px;color:#e5e5e5;letter-spacing:0.943px;-webkit-text-stroke:0.8px #e5e5e5;">Documentation</div>
<div class="t" style="left:333.00px;top:1761.32px;font-size:24px;line-height:24px;color:#a3a3a3;letter-spacing:0.294px;-webkit-text-stroke:0.3px #a3a3a3;">v2.9.0</div>
<div class="t" style="left:738.00px;top:397.12px;font-size:28.5px;line-height:28.5px;color:#a3a3a3;letter-spacing:0.235px;-webkit-text-stroke:0.35px #a3a3a3;">Search repositories...</div>
<div class="t" style="left:1760.40px;top:396.34px;font-size:28px;line-height:28px;color:#fafafa;letter-spacing:1.089px;-webkit-text-stroke:0.8px #fafafa;">Owner</div>
<div class="t" style="left:2112.00px;top:396.34px;font-size:28px;line-height:28px;color:#fafafa;letter-spacing:1.047px;-webkit-text-stroke:0.8px #fafafa;">Organization</div>
<div class="t" style="left:2465.50px;top:396.34px;font-size:28px;line-height:28px;color:#fafafa;letter-spacing:0.314px;-webkit-text-stroke:0.8px #fafafa;">All Status</div>
<div class="t" style="left:2942.00px;top:396.34px;font-size:28px;line-height:28px;color:#171717;letter-spacing:1.104px;-webkit-text-stroke:0.8px #171717;">Mirror All</div>
<div class="t" style="left:697.50px;top:542.94px;font-size:28px;line-height:28px;color:#fafafa;letter-spacing:0.941px;-webkit-text-stroke:0.8px #fafafa;">Repository</div>
<div class="t" style="left:1371.00px;top:542.94px;font-size:28px;line-height:28px;color:#fafafa;letter-spacing:1.164px;-webkit-text-stroke:0.8px #fafafa;">Owner</div>
<div class="t" style="left:1668.70px;top:542.94px;font-size:28px;line-height:28px;color:#fafafa;letter-spacing:1.010px;-webkit-text-stroke:0.8px #fafafa;">Organization</div>
<div class="t" style="left:1966.60px;top:542.94px;font-size:28px;line-height:28px;color:#fafafa;letter-spacing:1.111px;-webkit-text-stroke:0.8px #fafafa;">Last Mirrored</div>
<div class="t" style="left:2265.50px;top:542.94px;font-size:28px;line-height:28px;color:#fafafa;letter-spacing:1.184px;-webkit-text-stroke:0.8px #fafafa;">Status</div>
<div class="t" style="left:2564.60px;top:542.94px;font-size:28px;line-height:28px;color:#fafafa;letter-spacing:1.130px;-webkit-text-stroke:0.8px #fafafa;">Actions</div>
<div class="t" style="left:2926.20px;top:542.94px;font-size:28px;line-height:28px;color:#fafafa;letter-spacing:1.209px;-webkit-text-stroke:0.8px #fafafa;">Links</div>
<div class="t" style="left:743.60px;top:633.27px;font-size:34px;line-height:34px;color:#fafafa;letter-spacing:0.120px;-webkit-text-stroke:0.7px #fafafa;">.github</div>
<div class="t" style="left:746.00px;top:677.72px;font-size:24px;line-height:24px;color:#a3a3a3;letter-spacing:0.850px;-webkit-text-stroke:0.3px #a3a3a3;">uiastra/.github</div>
<div class="t" style="left:1368.80px;top:652.12px;font-size:28.5px;line-height:28.5px;color:#fafafa;letter-spacing:0.050px;-webkit-text-stroke:0.4px #fafafa;">uiastra</div>
<div class="t" style="left:1665.10px;top:652.12px;font-size:28.5px;line-height:28.5px;color:#fafafa;letter-spacing:0.050px;-webkit-text-stroke:0.4px #fafafa;">uiastra</div>
<div class="t" style="left:1961.50px;top:652.12px;font-size:28.5px;line-height:28.5px;color:#fafafa;letter-spacing:0.120px;-webkit-text-stroke:0.4px #fafafa;">Never</div>
<div class="t" style="left:2288.60px;top:651.84px;font-size:28px;line-height:28px;color:#fafafa;letter-spacing:1.000px;-webkit-text-stroke:0.8px #fafafa;">Imported</div>
<div class="t" style="left:2633.80px;top:651.84px;font-size:28px;line-height:28px;color:#fafafa;font-weight:700;letter-spacing:-0.200px;">Mirror</div>
<div class="t" style="left:745.60px;top:763.27px;font-size:34px;line-height:34px;color:#fafafa;letter-spacing:0.120px;-webkit-text-stroke:0.7px #fafafa;">2048</div>
<div class="t" style="left:746.00px;top:807.72px;font-size:24px;line-height:24px;color:#a3a3a3;letter-spacing:0.850px;-webkit-text-stroke:0.3px #a3a3a3;">gabrielecirulli/2048</div>
<div class="t" style="left:1368.80px;top:782.12px;font-size:28.5px;line-height:28.5px;color:#fafafa;letter-spacing:0.050px;-webkit-text-stroke:0.4px #fafafa;">gabrielecirulli</div>
<div class="t" style="left:1665.10px;top:782.12px;font-size:28.5px;line-height:28.5px;color:#fafafa;letter-spacing:0.050px;-webkit-text-stroke:0.4px #fafafa;">-</div>
<div class="t" style="left:1961.80px;top:762.42px;font-size:28.5px;line-height:28.5px;color:#fafafa;letter-spacing:0.360px;-webkit-text-stroke:0.4px #fafafa;">May 25, 2025 at</div>
<div class="t" style="left:1962.80px;top:802.42px;font-size:28.5px;line-height:28.5px;color:#fafafa;letter-spacing:0.530px;-webkit-text-stroke:0.4px #fafafa;">07:46 AM</div>
<div class="t" style="left:2289.60px;top:781.84px;font-size:28px;line-height:28px;color:#fafafa;letter-spacing:1.000px;-webkit-text-stroke:0.8px #fafafa;">Synced</div>
<div class="t" style="left:2634.80px;top:781.84px;font-size:28px;line-height:28px;color:#fafafa;font-weight:700;letter-spacing:-0.600px;">Sync</div>
<div class="t" style="left:745.60px;top:893.27px;font-size:34px;line-height:34px;color:#fafafa;letter-spacing:0.120px;-webkit-text-stroke:0.7px #fafafa;">aat</div>
<div class="t" style="left:747.00px;top:937.72px;font-size:24px;line-height:24px;color:#a3a3a3;letter-spacing:0.850px;-webkit-text-stroke:0.3px #a3a3a3;">AsyncAlgoTrading/aat</div>
<div class="t" style="left:1369.80px;top:912.12px;font-size:28.5px;line-height:28.5px;color:#fafafa;letter-spacing:0.050px;-webkit-text-stroke:0.4px #fafafa;">AsyncAlgoTrading</div>
<div class="t" style="left:1666.10px;top:912.12px;font-size:28.5px;line-height:28.5px;color:#fafafa;letter-spacing:0.050px;-webkit-text-stroke:0.4px #fafafa;">AsyncAlgoTrading</div>
<div class="t" style="left:1961.80px;top:892.42px;font-size:28.5px;line-height:28.5px;color:#fafafa;letter-spacing:0.360px;-webkit-text-stroke:0.4px #fafafa;">May 25, 2025 at</div>
<div class="t" style="left:1961.80px;top:932.42px;font-size:28.5px;line-height:28.5px;color:#fafafa;letter-spacing:0.530px;-webkit-text-stroke:0.4px #fafafa;">10:47 AM</div>
<div class="t" style="left:2289.60px;top:911.84px;font-size:28px;line-height:28px;color:#fafafa;letter-spacing:1.000px;-webkit-text-stroke:0.8px #fafafa;">Synced</div>
<div class="t" style="left:2634.80px;top:911.84px;font-size:28px;line-height:28px;color:#fafafa;font-weight:700;letter-spacing:-0.600px;">Sync</div>
<div class="t" style="left:745.60px;top:1023.27px;font-size:34px;line-height:34px;color:#fafafa;letter-spacing:0.120px;-webkit-text-stroke:0.7px #fafafa;">action</div>
<div class="t" style="left:748.00px;top:1067.72px;font-size:24px;line-height:24px;color:#a3a3a3;letter-spacing:0.850px;-webkit-text-stroke:0.3px #a3a3a3;">withastro/action</div>
<div class="t" style="left:1370.80px;top:1042.12px;font-size:28.5px;line-height:28.5px;color:#fafafa;letter-spacing:0.050px;-webkit-text-stroke:0.4px #fafafa;">withastro</div>
<div class="t" style="left:1667.10px;top:1042.12px;font-size:28.5px;line-height:28.5px;color:#fafafa;letter-spacing:0.050px;-webkit-text-stroke:0.4px #fafafa;">withastro</div>
<div class="t" style="left:1961.80px;top:1022.42px;font-size:28.5px;line-height:28.5px;color:#fafafa;letter-spacing:0.360px;-webkit-text-stroke:0.4px #fafafa;">May 24, 2025 at</div>
<div class="t" style="left:1962.80px;top:1062.42px;font-size:28.5px;line-height:28.5px;color:#fafafa;letter-spacing:0.530px;-webkit-text-stroke:0.4px #fafafa;">08:16 PM</div>
<div class="t" style="left:2288.60px;top:1041.84px;font-size:28px;line-height:28px;color:#fafafa;letter-spacing:1.000px;-webkit-text-stroke:0.8px #fafafa;">Mirrored</div>
<div class="t" style="left:2634.80px;top:1041.84px;font-size:28px;line-height:28px;color:#fafafa;font-weight:700;letter-spacing:-0.600px;">Sync</div>
<div class="t" style="left:746.60px;top:1153.27px;font-size:34px;line-height:34px;color:#fafafa;letter-spacing:0.120px;-webkit-text-stroke:0.7px #fafafa;">AgentGPT</div>
<div class="t" style="left:746.00px;top:1197.72px;font-size:24px;line-height:24px;color:#a3a3a3;letter-spacing:0.850px;-webkit-text-stroke:0.3px #a3a3a3;">reworkd/AgentGPT</div>
<div class="t" style="left:1368.80px;top:1172.12px;font-size:28.5px;line-height:28.5px;color:#fafafa;letter-spacing:0.050px;-webkit-text-stroke:0.4px #fafafa;">reworkd</div>
<div class="t" style="left:1665.10px;top:1172.12px;font-size:28.5px;line-height:28.5px;color:#fafafa;letter-spacing:0.050px;-webkit-text-stroke:0.4px #fafafa;">reworkd</div>
<div class="t" style="left:1961.80px;top:1152.42px;font-size:28.5px;line-height:28.5px;color:#fafafa;letter-spacing:0.360px;-webkit-text-stroke:0.4px #fafafa;">May 24, 2025 at</div>
<div class="t" style="left:1962.80px;top:1192.42px;font-size:28.5px;line-height:28.5px;color:#fafafa;letter-spacing:0.530px;-webkit-text-stroke:0.4px #fafafa;">07:08 PM</div>
<div class="t" style="left:2289.60px;top:1171.84px;font-size:28px;line-height:28px;color:#fafafa;letter-spacing:1.000px;-webkit-text-stroke:0.8px #fafafa;">Synced</div>
<div class="t" style="left:2634.80px;top:1171.84px;font-size:28px;line-height:28px;color:#fafafa;font-weight:700;letter-spacing:-0.600px;">Sync</div>
<div class="t" style="left:746.60px;top:1283.27px;font-size:34px;line-height:34px;color:#fafafa;letter-spacing:0.120px;-webkit-text-stroke:0.7px #fafafa;">AirpodsBattery-Monitor-For-Mac</div>
<div class="t" style="left:746.00px;top:1327.72px;font-size:24px;line-height:24px;color:#a3a3a3;letter-spacing:0.850px;-webkit-text-stroke:0.3px #a3a3a3;">mohamed-arradi/AirpodsBattery-Monitor-For-Mac</div>
<div class="t" style="left:1368.80px;top:1302.12px;font-size:28.5px;line-height:28.5px;color:#fafafa;letter-spacing:0.050px;-webkit-text-stroke:0.4px #fafafa;">mohamed-arradi</div>
<div class="t" style="left:1665.10px;top:1302.12px;font-size:28.5px;line-height:28.5px;color:#fafafa;letter-spacing:0.050px;-webkit-text-stroke:0.4px #fafafa;">-</div>
<div class="t" style="left:1961.80px;top:1282.42px;font-size:28.5px;line-height:28.5px;color:#fafafa;letter-spacing:0.360px;-webkit-text-stroke:0.4px #fafafa;">May 24, 2025 at</div>
<div class="t" style="left:1962.80px;top:1322.42px;font-size:28.5px;line-height:28.5px;color:#fafafa;letter-spacing:0.530px;-webkit-text-stroke:0.4px #fafafa;">07:33 PM</div>
<div class="t" style="left:2288.60px;top:1301.84px;font-size:28px;line-height:28px;color:#fafafa;letter-spacing:1.000px;-webkit-text-stroke:0.8px #fafafa;">Mirrored</div>
<div class="t" style="left:2634.80px;top:1301.84px;font-size:28px;line-height:28px;color:#fafafa;font-weight:700;letter-spacing:-0.600px;">Sync</div>
<div class="t" style="left:746.60px;top:1413.27px;font-size:34px;line-height:34px;color:#fafafa;letter-spacing:0.120px;-webkit-text-stroke:0.7px #fafafa;">AlphaPose</div>
<div class="t" style="left:746.00px;top:1457.72px;font-size:24px;line-height:24px;color:#a3a3a3;letter-spacing:0.850px;-webkit-text-stroke:0.3px #a3a3a3;">MVIG-SJTU/AlphaPose</div>
<div class="t" style="left:1367.80px;top:1432.12px;font-size:28.5px;line-height:28.5px;color:#fafafa;letter-spacing:0.050px;-webkit-text-stroke:0.4px #fafafa;">MVIG-SJTU</div>
<div class="t" style="left:1664.10px;top:1432.12px;font-size:28.5px;line-height:28.5px;color:#fafafa;letter-spacing:0.050px;-webkit-text-stroke:0.4px #fafafa;">MVIG-SJTU</div>
<div class="t" style="left:1961.80px;top:1412.42px;font-size:28.5px;line-height:28.5px;color:#fafafa;letter-spacing:0.360px;-webkit-text-stroke:0.4px #fafafa;">May 24, 2025 at</div>
<div class="t" style="left:1962.80px;top:1452.42px;font-size:28.5px;line-height:28.5px;color:#fafafa;letter-spacing:0.530px;-webkit-text-stroke:0.4px #fafafa;">08:12 PM</div>
<div class="t" style="left:2288.60px;top:1431.84px;font-size:28px;line-height:28px;color:#fafafa;letter-spacing:1.000px;-webkit-text-stroke:0.8px #fafafa;">Mirrored</div>
<div class="t" style="left:2634.80px;top:1431.84px;font-size:28px;line-height:28px;color:#fafafa;font-weight:700;letter-spacing:-0.600px;">Sync</div>
<div class="t" style="left:745.60px;top:1543.27px;font-size:34px;line-height:34px;color:#fafafa;letter-spacing:0.120px;-webkit-text-stroke:0.7px #fafafa;">alpine-chrome</div>
<div class="t" style="left:748.00px;top:1587.72px;font-size:24px;line-height:24px;color:#a3a3a3;letter-spacing:0.850px;-webkit-text-stroke:0.3px #a3a3a3;">jlandure/alpine-chrome</div>
<div class="t" style="left:1370.80px;top:1562.12px;font-size:28.5px;line-height:28.5px;color:#fafafa;letter-spacing:0.050px;-webkit-text-stroke:0.4px #fafafa;">jlandure</div>
<div class="t" style="left:1665.10px;top:1562.12px;font-size:28.5px;line-height:28.5px;color:#fafafa;letter-spacing:0.050px;-webkit-text-stroke:0.4px #fafafa;">-</div>
<div class="t" style="left:1961.80px;top:1542.42px;font-size:28.5px;line-height:28.5px;color:#fafafa;letter-spacing:0.360px;-webkit-text-stroke:0.4px #fafafa;">May 24, 2025 at</div>
<div class="t" style="left:1962.80px;top:1582.42px;font-size:28.5px;line-height:28.5px;color:#fafafa;letter-spacing:0.530px;-webkit-text-stroke:0.4px #fafafa;">07:12 PM</div>
<div class="t" style="left:2288.60px;top:1561.84px;font-size:28px;line-height:28px;color:#fafafa;letter-spacing:1.000px;-webkit-text-stroke:0.8px #fafafa;">Mirrored</div>
<div class="t" style="left:2634.80px;top:1561.84px;font-size:28px;line-height:28px;color:#fafafa;font-weight:700;letter-spacing:-0.600px;">Sync</div>
<div class="t" style="left:746.60px;top:1673.27px;font-size:34px;line-height:34px;color:#fafafa;letter-spacing:0.120px;-webkit-text-stroke:0.7px #fafafa;">ALPR</div>
<div class="t" style="left:746.00px;top:1717.72px;font-size:24px;line-height:24px;color:#a3a3a3;letter-spacing:0.850px;-webkit-text-stroke:0.3px #a3a3a3;">Deevoluation/ALPR</div>
<div class="t" style="left:1367.80px;top:1692.12px;font-size:28.5px;line-height:28.5px;color:#fafafa;letter-spacing:0.050px;-webkit-text-stroke:0.4px #fafafa;">Deevoluation</div>
<div class="t" style="left:1664.10px;top:1692.12px;font-size:28.5px;line-height:28.5px;color:#fafafa;letter-spacing:0.050px;-webkit-text-stroke:0.4px #fafafa;">Deevoluation</div>
<div class="t" style="left:1961.80px;top:1672.42px;font-size:28.5px;line-height:28.5px;color:#fafafa;letter-spacing:0.360px;-webkit-text-stroke:0.4px #fafafa;">May 24, 2025 at</div>
<div class="t" style="left:1962.80px;top:1712.42px;font-size:28.5px;line-height:28.5px;color:#fafafa;letter-spacing:0.530px;-webkit-text-stroke:0.4px #fafafa;">06:46 PM</div>
<div class="t" style="left:2288.60px;top:1691.84px;font-size:28px;line-height:28px;color:#fafafa;letter-spacing:1.000px;-webkit-text-stroke:0.8px #fafafa;">Mirrored</div>
<div class="t" style="left:2634.80px;top:1691.84px;font-size:28px;line-height:28px;color:#fafafa;font-weight:700;letter-spacing:-0.600px;">Sync</div>
<div class="t" style="left:727.60px;top:1743.54px;font-size:28px;line-height:28px;color:#fafafa;letter-spacing:1.104px;-webkit-text-stroke:0.8px #fafafa;z-index:6;">454 repositories total</div>
<div class="t" style="left:1818.50px;top:1744.92px;font-size:24px;line-height:24px;color:#4fd192;letter-spacing:0.906px;-webkit-text-stroke:0.8px #4fd192;z-index:6;">Live active</div>
</body></html>
